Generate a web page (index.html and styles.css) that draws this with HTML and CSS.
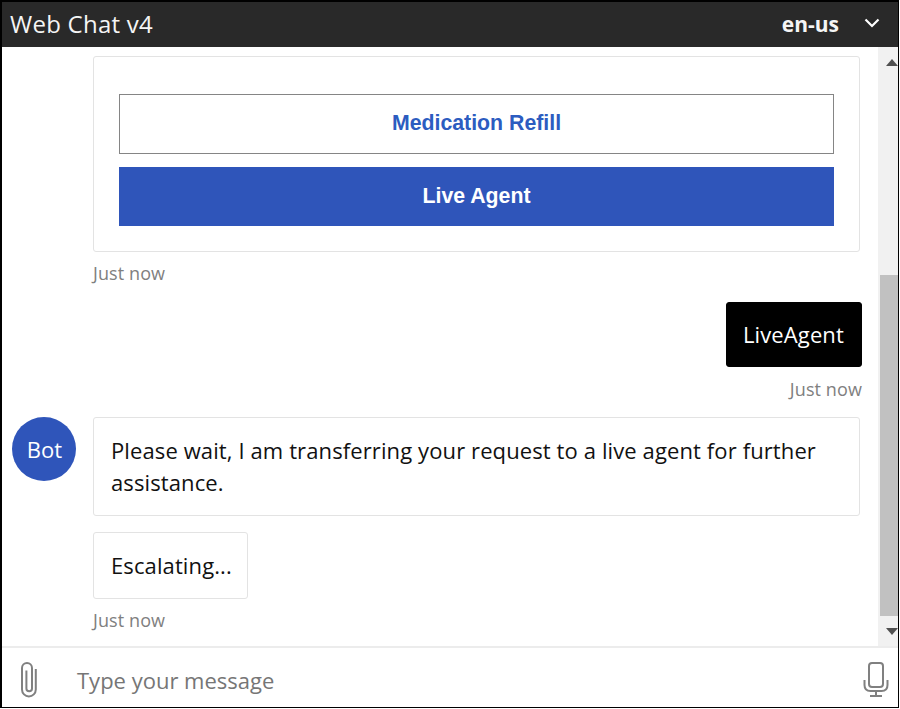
FILE: index.html
```html
<!DOCTYPE html>
<html lang="en">
<head><meta charset="utf-8"><title>Web Chat v4</title><link rel="stylesheet" href="styles.css"></head>
<body>
<div class="chat">
  <header class="header">
    <span class="title">Web Chat v4</span>
    <span class="locale">en-us</span>
    <svg class="chevron" width="16" height="10" viewBox="0 0 16 10"><path d="M1.500 1.500 8 8l6.500-6.500" fill="none" stroke="#fff" stroke-width="2.200"/></svg>
  </header>
  <main class="body">
    <div class="transcript">
      <section class="card">
        <button class="action">Medication Refill</button>
        <button class="action primary">Live Agent</button>
      </section>
      <div class="time">Just now</div>
      <div class="bubble user">LiveAgent</div>
      <div class="time right">Just now</div>
      <div class="row">
        <div class="avatar">Bot</div>
        <div class="bubble wide">Please wait, I am transferring your request to a live agent for further<br>assistance.</div>
      </div>
      <div class="bubble small">Escalating...</div>
      <div class="time">Just now</div>
    </div>
    <div class="scrollbar">
      <svg class="arrow" width="12" height="7" viewBox="0 0 12 7"><path d="M0 7 6 0l6 7z" fill="#505050"/></svg>
      <i class="thumb"></i>
      <svg class="arrow" width="12" height="7" viewBox="0 0 12 7"><path d="M0 0h12L6 7z" fill="#505050"/></svg>
    </div>
  </main>
  <footer class="sendbox">
    <svg class="clip" width="18" height="37" viewBox="0 0 18 37"><path d="M15.800 8v20.500a6.900 6.900 0 0 1-13.800 0V7a5 5 0 0 1 10 0v20.500a2.800 2.800 0 0 1-5.600 0V9.500" fill="none" stroke="#808080" stroke-width="2"/></svg>
    <span class="placeholder">Type your message</span>
    <svg class="mic" width="26" height="37" viewBox="0 0 26 37"><rect x="6" y="2" width="14" height="24" rx="3" fill="none" stroke="#808080" stroke-width="2"/><path d="M1.500 19v5q0 6 6 6h11q6 0 6-6v-5M13 30v5M7 35h12" fill="none" stroke="#808080" stroke-width="2"/></svg>
  </footer>
</div>
</body></html>
```
FILE: styles.css
```css
*{box-sizing:border-box}
body{margin:0;background:#fff;font-family:"Open Sans","Noto Sans",sans-serif;color:#111}
.chat{width:899px;height:708px;border:solid #000;border-width:2px 1px 1px 2px;display:flex;flex-direction:column}
.header{height:45px;background:#292929;color:#f5f5f5;display:flex;align-items:center;padding:0 18px 0 8px;flex:none}
.title{flex:1;font-size:24px;letter-spacing:.25px;line-height:40px;margin-top:-2px}
.locale{font-size:21px;font-weight:700;margin:-2px 25px 0 0}
.chevron{margin-top:-3px}
.body{height:599px;display:flex;flex:none}
.transcript{flex:1;padding:9px 16px 0 91px}
.card{width:767px;height:196px;border:1px solid #e3e3e3;border-radius:3px;padding:37px 25px 25px;display:flex;flex-direction:column;gap:13px}
.action{height:60px;padding:0 0 2px;border:1px solid #858585;background:#fff;color:#2c5cc0;font:700 21.300px "Liberation Sans",sans-serif;flex:none}
.primary{height:59px;padding:0;background:#2f55ba;color:#fff;border-color:#2f55ba}
.time{font-size:18px;line-height:24px;color:#808080;margin-top:9px;letter-spacing:.1px}
.bubble{border:1px solid #e3e3e3;border-radius:3px;font-size:22px;letter-spacing:.11px;line-height:32px;padding:16px 17px;white-space:nowrap}
.user{background:#000;color:#fff;border-color:#000;width:136px;height:65px;padding:15px 16px;margin:17px 0 0 auto}
.right{text-align:right;margin-top:10px}
.row{display:flex;margin:16px 0 0 -81px;gap:17px}
.avatar{width:64px;height:64px;border-radius:50%;background:#2f55ba;color:#fff;display:grid;place-items:center;font-size:22px;padding-left:1px;flex:none}
.wide{width:767px;height:99px}
.small{width:155px;height:67px;margin-top:16px}
.scrollbar{width:20px;background:#f1f1f1;display:flex;flex-direction:column;align-items:flex-end;overflow:hidden;padding-top:12px}
.arrow{flex:none;display:block}
.thumb{width:18px;height:341px;background:#c1c1c1;margin:209px 0 12px;flex:none}
.sendbox{flex:1;border-top:2px solid #ececec;display:flex;align-items:center;padding:3px 9px 0 18px}
.clip{flex:none}
.placeholder{flex:1;margin-left:39px;padding-top:1px;font-size:22px;color:#767676}
.mic{flex:none}
```
